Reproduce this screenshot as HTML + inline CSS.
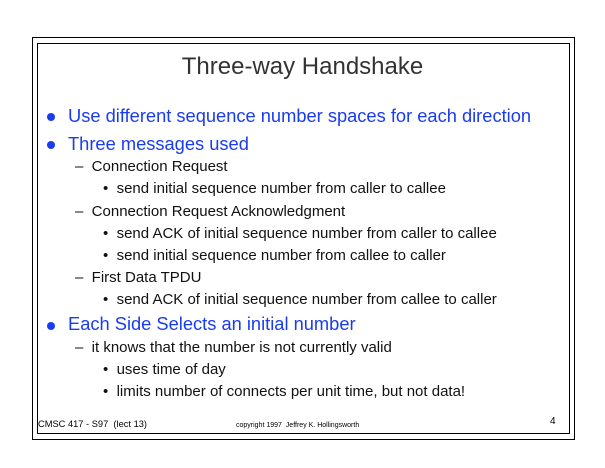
<!DOCTYPE html>
<html><head><style>
body{margin:0;width:605px;height:468px;background:#fff;font-family:"Liberation Sans",sans-serif;position:relative;overflow:hidden}
.b{position:absolute;border:1px solid #000}
.t{position:absolute;white-space:nowrap;line-height:1}
.l1{color:#1a3cf0;font-size:18.3px}
.l2{color:#111;font-size:15px}
.dot{position:absolute;width:8px;height:8px;border-radius:50%;background:#1a3cf0}
</style></head><body>
<div class="b" style="left:32px;top:37px;width:541px;height:401px"></div>
<div class="b" style="left:37px;top:43px;width:531px;height:389px"></div>
<div class="t" style="left:0;width:605px;text-align:center;top:55px;font-size:24px;color:#333">Three-way Handshake</div>

<div class="dot" style="left:47px;top:113px"></div>
<div class="t l1" style="left:68px;top:107px">Use different sequence number spaces for each direction</div>
<div class="dot" style="left:47px;top:141px"></div>
<div class="t l1" style="left:68px;top:135px">Three messages used</div>
<div class="t l2" style="left:75px;top:159px">–&nbsp;&nbsp;Connection Request</div>
<div class="t l2" style="left:103px;top:181px">•&nbsp;&nbsp;send initial sequence number from caller to callee</div>
<div class="t l2" style="left:75px;top:204px">–&nbsp;&nbsp;Connection Request Acknowledgment</div>
<div class="t l2" style="left:103px;top:226px">•&nbsp;&nbsp;send ACK of initial sequence number from caller to callee</div>
<div class="t l2" style="left:103px;top:248px">•&nbsp;&nbsp;send initial sequence number from callee to caller</div>
<div class="t l2" style="left:75px;top:270px">–&nbsp;&nbsp;First Data TPDU</div>
<div class="t l2" style="left:103px;top:292px">•&nbsp;&nbsp;send ACK of initial sequence number from callee to caller</div>
<div class="dot" style="left:47px;top:322px"></div>
<div class="t l1" style="left:68px;top:315px">Each Side Selects an initial number</div>
<div class="t l2" style="left:75px;top:340px">–&nbsp;&nbsp;it knows that the number is not currently valid</div>
<div class="t l2" style="left:103px;top:362px">•&nbsp;&nbsp;uses time of day</div>
<div class="t l2" style="left:103px;top:384px">•&nbsp;&nbsp;limits number of connects per unit time, but not data!</div>

<div class="t" style="left:38px;top:420px;font-size:9.3px">CMSC 417 - S97&nbsp; (lect 13)</div>
<div class="t" style="left:236px;top:422px;font-size:7px">copyright 1997&nbsp; Jeffrey K. Hollingsworth</div>
<div class="t" style="left:550px;top:417px;font-size:10px">4</div>
</body></html>
